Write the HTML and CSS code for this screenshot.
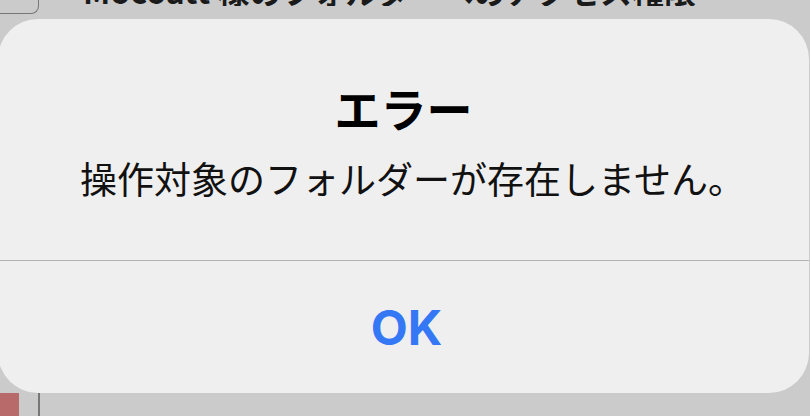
FILE: index.html
```html
<!DOCTYPE html>
<html lang="ja">
<head>
  <meta charset="UTF-8" />
  <meta name="viewport" content="width=device-width, initial-scale=1" />
  <title>エラー</title>
  <link rel="stylesheet" href="styles.css">
</head>
<body>

  <div class="topbar">
    <div class="tab"></div>
    <div class="top-title">Mocoatt 様のフォルダーへのアクセス権限</div>
  </div>

  <div class="alert">
    <div class="alert-body">
      <h1>エラー</h1>
      <p>操作対象のフォルダーが存在しません。</p>
    </div>
    <button type="button" class="alert-btn">OK</button>
  </div>

  <div class="bottom">
    <div class="stripe"></div>
    <div class="edge"></div>
  </div>

</body>
</html>
```

FILE: styles.css
```css
* {
  box-sizing: border-box;
}

html, body {
  margin: 0;
  padding: 0;
}

body {
  width: 810px;
  height: 416px;
  overflow: hidden;
  background: #cbcbcb;
  font-family: 'Noto Sans CJK JP', 'Noto Sans', sans-serif;
  color: #000;
}

/* the bar behind the alert, mostly hidden */
.topbar {
  height: 19px;
  display: flex;
  align-items: flex-start;
}

.tab {
  flex: none;
  width: 39px;
  height: 14px;
  border-right: 1.5px solid #777;
  border-bottom: 1.5px solid #777;
  border-bottom-right-radius: 8px;
}

.top-title {
  margin-left: 44px;
  height: 6px;
  overflow: hidden;
  display: flex;
  flex-direction: column;
  justify-content: flex-end;
  font-size: 32px;
  font-weight: 700;
  line-height: 32px;
  color: #1a1a1a;
  white-space: nowrap;
}

.top-title::after {
  content: "";
  flex: none;
  height: 0;
}

.alert {
  margin-left: -2px;
  width: 811px;
  height: 374px;
  border-radius: 40px;
  background: #efefef;
  display: flex;
  flex-direction: column;
}

.alert-body {
  padding: 60px 20px 59px;
  text-align: center;
  border-bottom: 1px solid #b3b3b3;
}

.alert-body h1 {
  margin: 0;
  font-size: 46px;
  line-height: 56px;
  font-weight: 700;
}

.alert-body p {
  margin: 21px 0 0;
  padding-left: 18px;
  font-size: 37px;
  line-height: 45px;
  color: #111;
}

.alert-btn {
  flex: 1;
  border: none;
  background: none;
  font-family: 'Inter', 'Liberation Sans', sans-serif;
  font-size: 48px;
  font-weight: 700;
  color: #3478f6;
  padding: 0 0 0 6px;
}

.bottom {
  height: 23px;
  display: flex;
}

.stripe {
  width: 19px;
  background: #b86a6a;
}

.edge {
  margin-left: 19px;
  width: 1.5px;
  background: #777;
}
```
